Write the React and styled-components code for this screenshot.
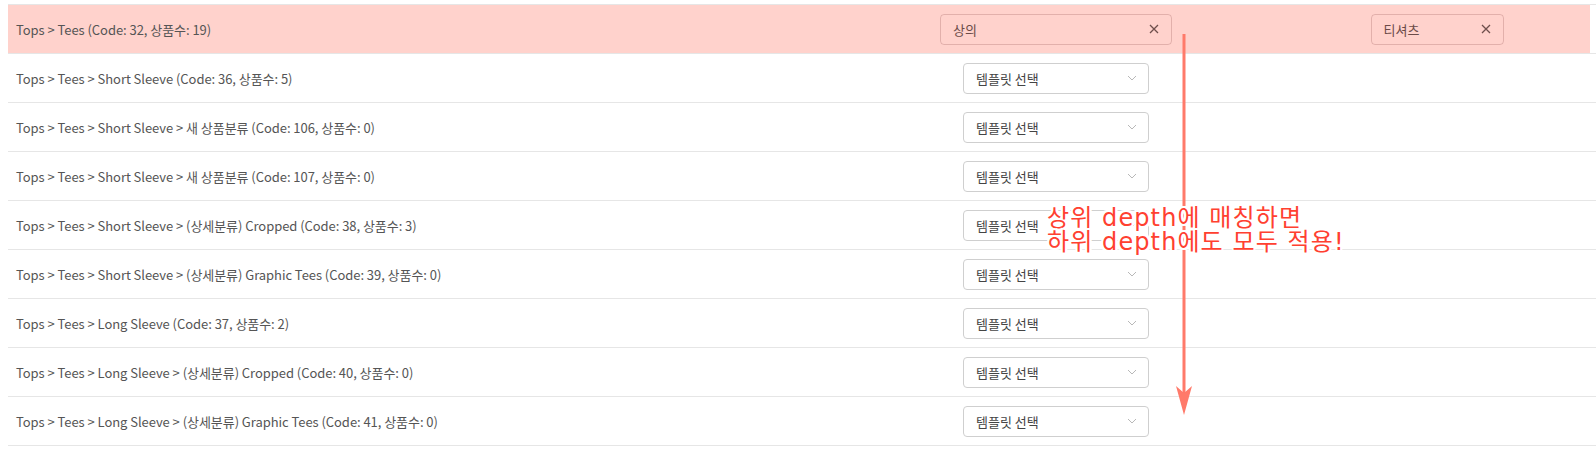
import React from 'react';
import styled, { createGlobalStyle } from 'styled-components';

const ROWS = [
  { name: 'Tops > Tees (Code: 32, 상품수: 19)', matched: ['상의', '티셔츠'] },
  { name: 'Tops > Tees > Short Sleeve (Code: 36, 상품수: 5)' },
  { name: 'Tops > Tees > Short Sleeve > 새 상품분류 (Code: 106, 상품수: 0)' },
  { name: 'Tops > Tees > Short Sleeve > 새 상품분류 (Code: 107, 상품수: 0)' },
  { name: 'Tops > Tees > Short Sleeve > (상세분류) Cropped (Code: 38, 상품수: 3)' },
  { name: 'Tops > Tees > Short Sleeve > (상세분류) Graphic Tees (Code: 39, 상품수: 0)' },
  { name: 'Tops > Tees > Long Sleeve (Code: 37, 상품수: 2)' },
  { name: 'Tops > Tees > Long Sleeve > (상세분류) Cropped (Code: 40, 상품수: 0)' },
  { name: 'Tops > Tees > Long Sleeve > (상세분류) Graphic Tees (Code: 41, 상품수: 0)' },
];

const GlobalStyle = createGlobalStyle`
  html, body {
    margin: 0;
    padding: 0;
    background: #fff;
    overflow: hidden;
  }
  body {
    font-family: 'Noto Sans CJK KR', 'Noto Sans', sans-serif;
  }
`;

const Page = styled.div`
  position: relative;
  padding: 4px 0 0 8px;
`;

const Table = styled.div`
  border-top: 1px solid #e6e6e6;
`;

const Row = styled.div`
  display: grid;
  grid-template-columns: 820px 456px 306px 1fr;
  height: 48px;
  border-bottom: 1px solid #e6e6e6;
`;

const Cell = styled.div`
  display: flex;
  align-items: center;
  justify-content: ${(p) => (p.$center ? 'center' : 'flex-start')};
  padding-left: ${(p) => (p.$center ? '0' : '8px')};
  background: ${(p) => (p.$hl ? '#ffd2cc' : 'transparent')};
`;

const Name = styled.span`
  font-size: 13px;
  color: #555;
  letter-spacing: -0.05px;
`;

const Tag = styled.div`
  box-sizing: border-box;
  width: ${(p) => p.$w}px;
  height: 31px;
  display: flex;
  align-items: center;
  justify-content: space-between;
  padding: 0 12px 0 12px;
  border: 1px solid rgba(150, 90, 85, 0.28);
  border-radius: 4px;
  font-size: 13px;
  color: #6b4b48;
`;

const Select = styled.div`
  box-sizing: border-box;
  width: 186px;
  height: 31px;
  display: flex;
  align-items: center;
  justify-content: space-between;
  padding: 0 11px 0 12px;
  border: 1px solid #cfcfcf;
  border-radius: 4px;
  font-size: 13px;
  color: #444;
  background: #fff;
`;

const Overlay = styled.div`
  position: absolute;
  left: 1176px;
  top: 34px;
  width: 16px;
  height: 382px;
  pointer-events: none;
`;

const Note = styled.div`
  position: absolute;
  left: 1047px;
  top: 206px;
  font-family: 'DejaVu Sans', 'Noto Sans CJK KR', sans-serif;
  font-size: 24px;
  line-height: 24px;
  letter-spacing: 1.1px;
  color: #ff4030;
  white-space: nowrap;
  text-shadow:
    0 0 2px #fff, 0 0 2px #fff, 2px 0 0 #fff, -2px 0 0 #fff,
    0 2px 0 #fff, 0 -2px 0 #fff, 2px 2px 0 #fff, -2px -2px 0 #fff,
    2px -2px 0 #fff, -2px 2px 0 #fff;
`;

const CloseIcon = () => (
  <svg width="10" height="10" viewBox="0 0 10 10">
    <path d="M1 1L9 9M9 1L1 9" stroke="#6e4f4c" strokeWidth="1.3" fill="none" />
  </svg>
);

const Chevron = () => (
  <svg width="10" height="6" viewBox="0 0 10 6">
    <path d="M1 1L5 5L9 1" stroke="#b8b8b8" strokeWidth="1" fill="none" />
  </svg>
);

export default function App() {
  return (
    <Page>
      <GlobalStyle />
      <Table>
        {ROWS.map((row) => {
          const hl = !!row.matched;
          return (
            <Row key={row.name}>
              <Cell $hl={hl}>
                <Name>{row.name}</Name>
              </Cell>
              <Cell $hl={hl} $center>
                {hl ? (
                  <Tag $w={232}>
                    {row.matched[0]}
                    <CloseIcon />
                  </Tag>
                ) : (
                  <Select>
                    템플릿 선택
                    <Chevron />
                  </Select>
                )}
              </Cell>
              <Cell $hl={hl} $center>
                {hl && (
                  <Tag $w={133}>
                    {row.matched[1]}
                    <CloseIcon />
                  </Tag>
                )}
              </Cell>
              <Cell />
            </Row>
          );
        })}
      </Table>
      <Overlay>
        <svg width="16" height="382" viewBox="0 0 16 382">
          <rect x="6.5" y="0" width="3" height="360" fill="#ff7a6a" />
          <path d="M0 352L8 381L16 352L8 359Z" fill="#ff7a6a" />
        </svg>
      </Overlay>
      <Note>
        상위 depth에 매칭하면
        <br />
        하위 depth에도 모두 적용!
      </Note>
    </Page>
  );
}
